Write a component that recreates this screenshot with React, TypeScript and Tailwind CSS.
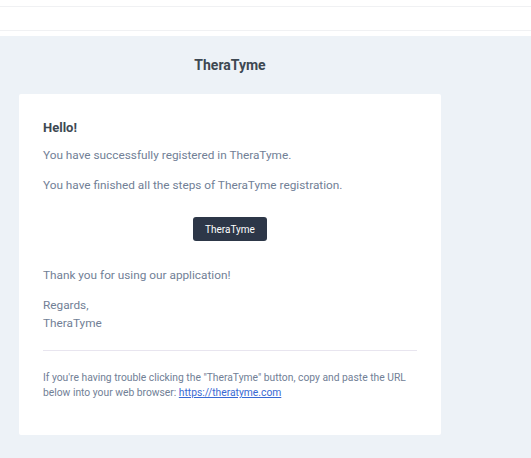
export default function App() {
  return (
    <div className="flex min-h-screen flex-col bg-white font-['Roboto',sans-serif]">
      {/* top bars */}
      <div className="h-[6px] bg-white" />
      <div className="h-[25px] border-t border-b border-[#f0f1f3] bg-white" />
      <div className="h-[5px] bg-white" />

      <div className="flex-1 bg-[#edf2f7] pb-[23px]">
        <div className="w-[460px]">
          <div className="flex h-[58px] items-center justify-center pt-[1px]">
            <span className="text-[14px] font-bold text-[#3d4852]">TheraTyme</span>
          </div>
          <div className="mx-[19px] rounded-[2px] bg-white px-[24px] pt-[25px] pb-[35px]">
            <h1 className="text-[13px] leading-[18px] font-bold text-[#3d4852]">Hello!</h1>
            <p className="mt-[9px] text-[11.8px] leading-[18px] text-[#718096]">
              You have successfully registered in TheraTyme.
            </p>
            <p className="mt-[12px] text-[11.8px] leading-[18px] text-[#718096]">
              You have finished all the steps of TheraTyme registration.
            </p>
            <div className="flex justify-center pt-[23px] pb-[25px]">
              <a className="flex h-[24px] w-[74px] items-center justify-center rounded-[3px] bg-[#2d3748] text-[10px] text-white">
                TheraTyme
              </a>
            </div>
            <p className="text-[11.8px] leading-[18px] text-[#718096]">Thank you for using our application!</p>
            <p className="mt-[12px] text-[11.8px] leading-[18px] text-[#718096]">
              Regards,
              <br />
              TheraTyme
            </p>
            <div className="mt-[18px] border-t border-[#e8e5ef]" />
            <p className="mt-[19px] text-[10.3px] leading-[15px] text-[#718096]">
              If you're having trouble clicking the "TheraTyme" button, copy and paste the URL below into your web
              browser: <a className="text-[#3869d4] underline">https://theratyme.com</a>
            </p>
          </div>
        </div>
      </div>
    </div>
  );
}
